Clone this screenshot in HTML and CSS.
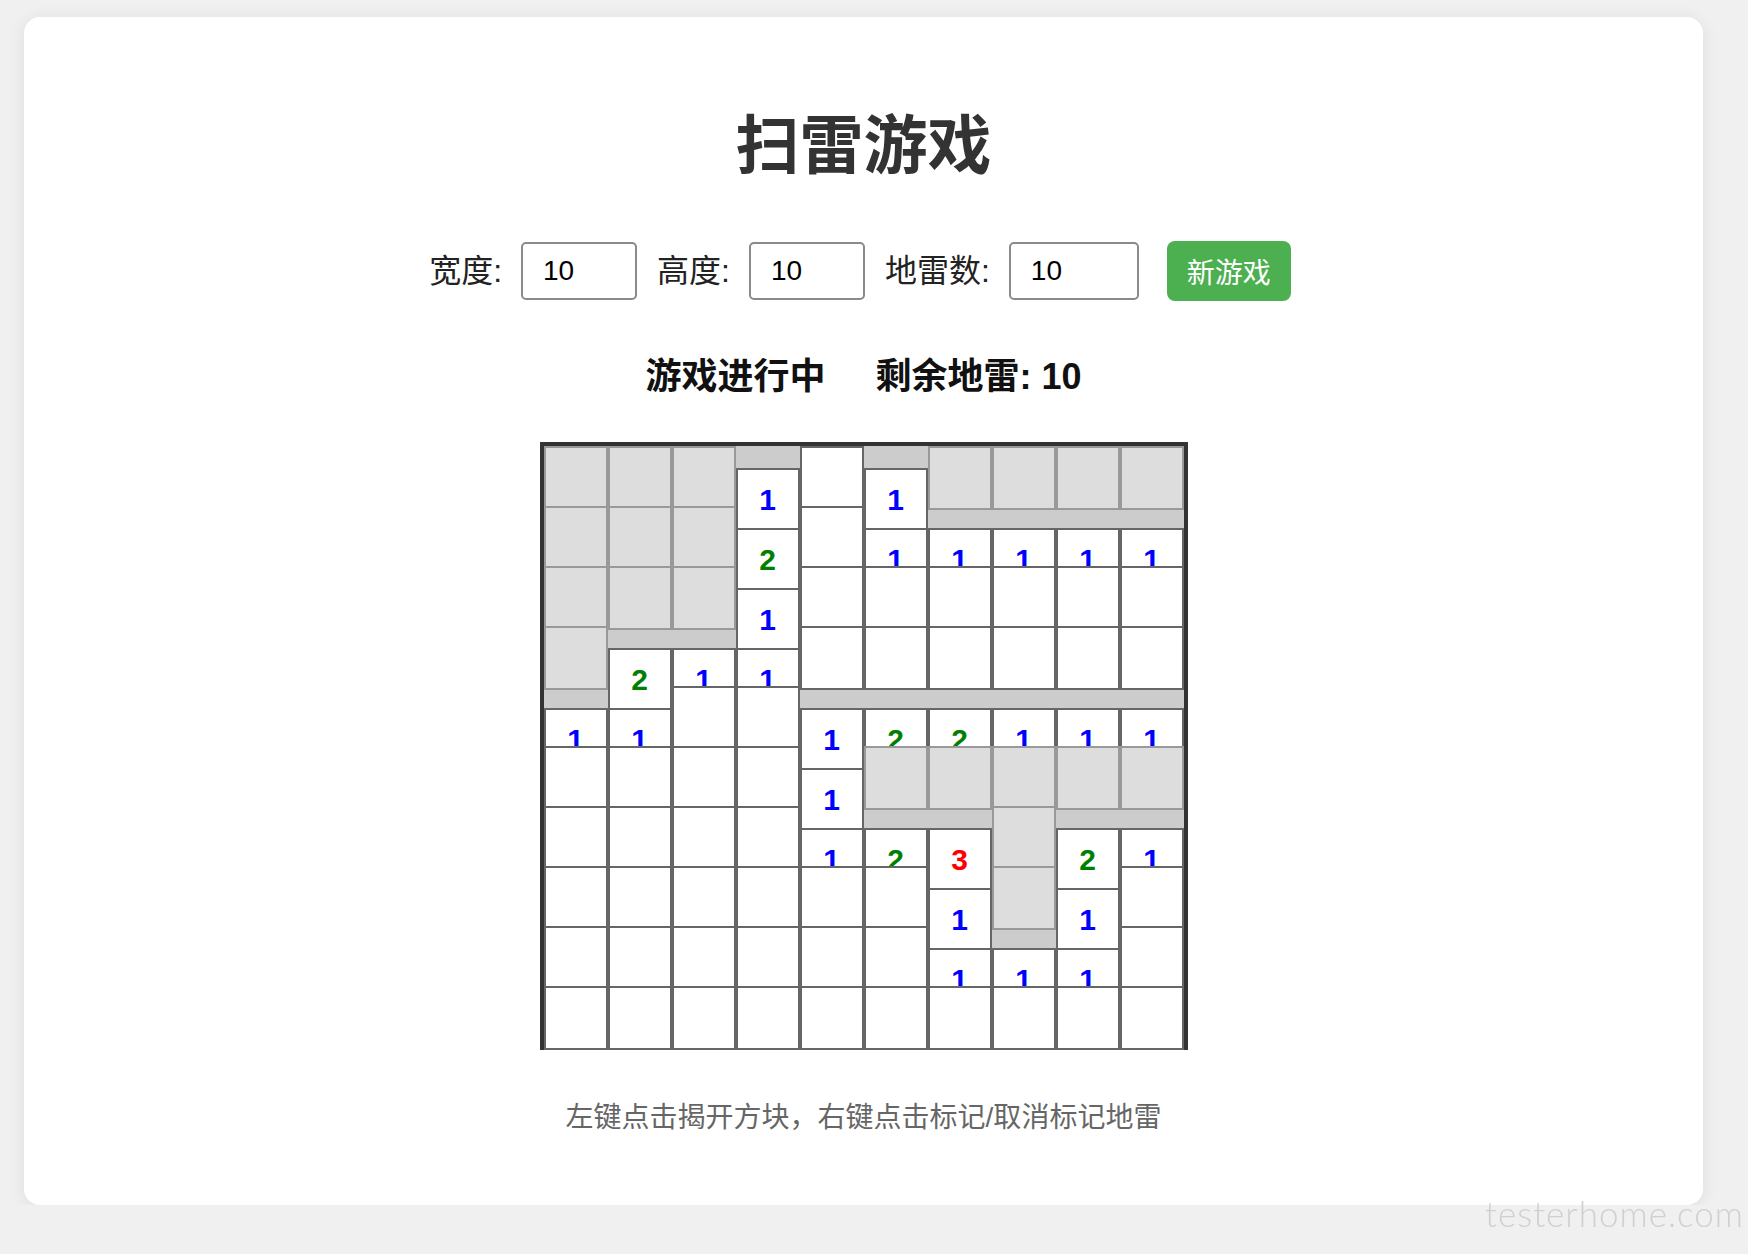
FILE: index.html
```html
<!DOCTYPE html>
<html lang="zh-CN">
  <head>
    <meta charset="UTF-8" />
    <meta name="viewport" content="width=device-width, initial-scale=1.0" />
    <title>扫雷游戏</title>
    <link rel="stylesheet" href="styles.css">
  </head>
  <body>
    <div class="container">
      <h1>扫雷游戏</h1>
      <div class="controls">
        <label for="width">宽度:</label>
        <input type="number" id="width" class="size" value="10" />
        <label for="height">高度:</label>
        <input type="number" id="height" class="size" value="10" />
        <label for="mines">地雷数:</label>
        <input type="number" id="mines" class="size mines" value="10" />
        <button class="btn new-game">新游戏</button>
      </div>
      <div class="status">
        <span class="state">游戏进行中</span>
        <span class="remaining">剩余地雷: <span class="count">10</span></span>
      </div>
      <div class="board">
        <div class="row"><span class="cell"></span><span class="cell"></span><span class="cell"></span><span class="cell open n1">1</span><span class="cell open"></span><span class="cell open n1">1</span><span class="cell"></span><span class="cell"></span><span class="cell"></span><span class="cell"></span></div>
        <div class="row"><span class="cell"></span><span class="cell"></span><span class="cell"></span><span class="cell open n2">2</span><span class="cell open"></span><span class="cell open n1">1</span><span class="cell open n1">1</span><span class="cell open n1">1</span><span class="cell open n1">1</span><span class="cell open n1">1</span></div>
        <div class="row"><span class="cell"></span><span class="cell"></span><span class="cell"></span><span class="cell open n1">1</span><span class="cell open"></span><span class="cell open"></span><span class="cell open"></span><span class="cell open"></span><span class="cell open"></span><span class="cell open"></span></div>
        <div class="row"><span class="cell"></span><span class="cell open n2">2</span><span class="cell open n1">1</span><span class="cell open n1">1</span><span class="cell open"></span><span class="cell open"></span><span class="cell open"></span><span class="cell open"></span><span class="cell open"></span><span class="cell open"></span></div>
        <div class="row"><span class="cell open n1">1</span><span class="cell open n1">1</span><span class="cell open"></span><span class="cell open"></span><span class="cell open n1">1</span><span class="cell open n2">2</span><span class="cell open n2">2</span><span class="cell open n1">1</span><span class="cell open n1">1</span><span class="cell open n1">1</span></div>
        <div class="row"><span class="cell open"></span><span class="cell open"></span><span class="cell open"></span><span class="cell open"></span><span class="cell open n1">1</span><span class="cell"></span><span class="cell"></span><span class="cell"></span><span class="cell"></span><span class="cell"></span></div>
        <div class="row"><span class="cell open"></span><span class="cell open"></span><span class="cell open"></span><span class="cell open"></span><span class="cell open n1">1</span><span class="cell open n2">2</span><span class="cell open n3">3</span><span class="cell"></span><span class="cell open n2">2</span><span class="cell open n1">1</span></div>
        <div class="row"><span class="cell open"></span><span class="cell open"></span><span class="cell open"></span><span class="cell open"></span><span class="cell open"></span><span class="cell open"></span><span class="cell open n1">1</span><span class="cell"></span><span class="cell open n1">1</span><span class="cell open"></span></div>
        <div class="row"><span class="cell open"></span><span class="cell open"></span><span class="cell open"></span><span class="cell open"></span><span class="cell open"></span><span class="cell open"></span><span class="cell open n1">1</span><span class="cell open n1">1</span><span class="cell open n1">1</span><span class="cell open"></span></div>
        <div class="row"><span class="cell open"></span><span class="cell open"></span><span class="cell open"></span><span class="cell open"></span><span class="cell open"></span><span class="cell open"></span><span class="cell open"></span><span class="cell open"></span><span class="cell open"></span><span class="cell open"></span></div>
      </div>
      <p class="hint">左键点击揭开方块，右键点击标记/取消标记地雷</p>
    </div>
    <div class="watermark">testerhome.com</div>
  </body>
</html>
```

FILE: styles.css
```css
* {
  box-sizing: border-box;
}

html,
body {
  margin: 0;
  padding: 0;
}

body {
  font-family: "Liberation Sans", "Noto Sans CJK SC", sans-serif;
  background-color: #f0f0f0;
  color: #222;
}

/* CARD */
.container {
  margin: 17px 45px 0 24px;
  padding: 89px 0 67px;
  background-color: #fff;
  border-radius: 16px;
  box-shadow: 0 2px 18px rgba(0, 0, 0, 0.08);
  text-align: center;
}

h1 {
  margin: 0;
  font-size: 64px;
  line-height: 80px;
  color: #333;
}

/* CONTROLS */
.controls {
  display: flex;
  justify-content: center;
  align-items: center;
  height: 60px;
  margin-top: 55px;
  padding-right: 7px;
}

.controls label {
  font-size: 32px;
  line-height: 40px;
  margin-right: 19px;
}

.size {
  width: 116px;
  height: 58px;
  margin-right: 20px;
  padding: 0 20px;
  font-family: inherit;
  font-size: 28px;
  color: #000;
  border: 2px solid #8a8a8a;
  border-radius: 5px;
  background: #fff;
}

.size.mines {
  width: 130px;
}

.btn {
  height: 60px;
  margin-left: 8px;
  padding: 0 20px;
  border: none;
  border-radius: 8px;
  background-color: #4caf50;
  color: #fff;
  font-family: inherit;
  font-size: 28px;
  cursor: pointer;
}

.btn:hover {
  background-color: #45a049;
}

/* STATUS */
.status {
  display: flex;
  justify-content: center;
  gap: 50px;
  margin-top: 51px;
  font-size: 36px;
  line-height: 50px;
  font-weight: bold;
  color: #111;
}

/* BOARD */
.board {
  width: fit-content;
  margin: 40px auto 0;
  border: 4px solid #333;
  background-color: #ccc;
  text-align: left;
}

.row {
  height: 60px;
  font-size: 0;
  white-space: nowrap;
}

.cell {
  display: inline-block;
  width: 64px;
  height: 64px;
  border: 2px solid #999;
  background-color: #ddd;
  font-size: 30px;
  line-height: 60px;
  font-weight: bold;
  text-align: center;
  cursor: pointer;
}

.cell.open {
  background-color: #fff;
  border-color: #666;
}

.n1 {
  color: #0000ff;
}

.n2 {
  color: #008000;
}

.n3 {
  color: #ff0000;
}

.hint {
  margin: 48px 0 0;
  font-size: 28px;
  line-height: 40px;
  color: #666;
}

.watermark {
  position: fixed;
  right: 4px;
  bottom: 20px;
  font-family: Lato, sans-serif;
  font-weight: 300;
  font-size: 35px;
  letter-spacing: 1px;
  color: #d0d0d0;
}
```
